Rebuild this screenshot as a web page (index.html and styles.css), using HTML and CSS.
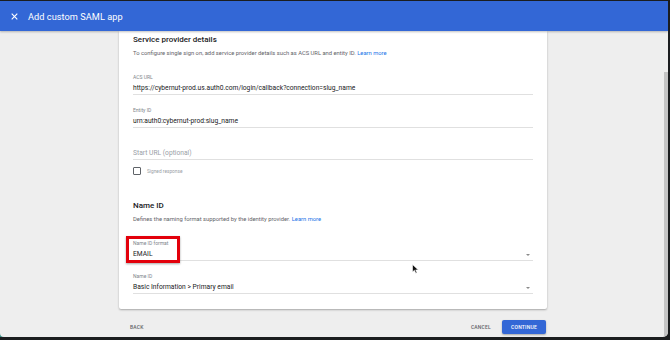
FILE: index.html
```html
<!DOCTYPE html>
<html lang="en">
<head>
    <meta charset="UTF-8">
    <meta name="viewport" content="width=device-width, initial-scale=1.0">
    <title>Add custom SAML app</title>
    <link rel="stylesheet" href="styles.css">
</head>
<body>

<div class="window">
    <header class="topbar">
        <span class="close">
            <svg width="7" height="7" viewBox="0 0 10 10"><path d="M1 1 L9 9 M9 1 L1 9" stroke="#fff" stroke-width="1.6" fill="none"/></svg>
        </span>
        <h1>Add custom SAML app</h1>
    </header>

    <main class="scroll">
        <section class="card">
            <h2>Service provider details</h2>
            <p class="hint">To configure single sign on, add service provider details such as ACS URL and entity ID. <a href="#">Learn more</a></p>

            <div class="field first">
                <label>ACS URL</label>
                <div class="value">https://cybernut-prod.us.auth0.com/login/callback?connection=slug_name</div>
            </div>

            <div class="field">
                <label>Entity ID</label>
                <div class="value">urn:auth0:cybernut-prod:slug_name</div>
            </div>

            <div class="field no-label">
                <div class="value placeholder">Start URL (optional)</div>
            </div>

            <div class="check-row">
                <span class="checkbox"></span>
                <span class="check-label">Signed response</span>
            </div>

            <h2 class="section">Name ID</h2>
            <p class="hint">Defines the naming format supported by the identity provider. <a href="#">Learn more</a></p>

            <div class="field first select">
                <label>Name ID format</label>
                <div class="value">EMAIL<span class="arrow"></span></div>
                <div class="highlight"></div>
            </div>

            <div class="field select">
                <label>Name ID</label>
                <div class="value">Basic Information &gt; Primary email<span class="arrow"></span></div>
            </div>
        </section>

        <footer class="actions">
            <button class="text-btn">BACK</button>
            <div class="right">
                <button class="text-btn">CANCEL</button>
                <button class="primary-btn">CONTINUE</button>
            </div>
        </footer>

        <div class="scrollbar"></div>

        <svg class="cursor" width="7" height="10" viewBox="0 0 7 10"><path d="M0.5 0.5 L0.5 8 L2.4 6.3 L3.8 9.3 L5 8.8 L3.7 5.9 L6.3 5.9 Z" fill="#111" stroke="#fff" stroke-width="0.6"/></svg>
    </main>
</div>

</body>
</html>
```

FILE: styles.css
```css
* {
    margin: 0;
    padding: 0;
    box-sizing: border-box;
}

html, body {
    width: 670px;
    height: 340px;
    overflow: hidden;
}

body {
    font-family: Roboto, "Liberation Sans", Arial, sans-serif;
    background-color: #1b1d1f;
    color: #202124;
    padding: 1px 2px 3px 0;
    position: relative;
}

/* desktop peeking through the bottom-left corner */
body::before {
    content: "";
    position: absolute;
    left: 0;
    bottom: 3px;
    width: 4px;
    height: 5px;
    background: #3a8f86;
}

.window {
    position: relative;
    width: 668px;
    height: 336px;
    background-color: #eeeeee;
    border-radius: 0 0 5px 4px;
    overflow: hidden;
    display: flex;
    flex-direction: column;
}

.topbar {
    height: 30px;
    background-color: #3367d6;
    display: flex;
    align-items: center;
    padding-left: 11px;
    box-shadow: 0 1px 2px rgba(0, 0, 0, 0.25);
    position: relative;
    z-index: 2;
}

.close {
    display: flex;
    width: 7px;
    height: 7px;
}

.topbar h1 {
    margin-left: 10px;
    font-size: 9.2px;
    font-weight: 400;
    color: #fff;
    letter-spacing: 0.05px;
}

.scroll {
    flex: 1;
    position: relative;
}

.card {
    width: 428px;
    margin-left: 119px;
    background-color: #fff;
    padding: 4px 14px 15px 14px;
    border-radius: 0 0 2px 2px;
    box-shadow: 0 1px 2px rgba(0, 0, 0, 0.3);
}

.card h2 {
    font-size: 8px;
    font-weight: 500;
    line-height: 10px;
    color: #202124;
}

.card h2.section {
    margin-top: 26px;
}

.hint {
    margin-top: 4px;
    font-size: 5.8px;
    line-height: 8px;
    color: #5f6368;
}

.hint a {
    color: #1a73e8;
    text-decoration: none;
}

.field {
    position: relative;
    margin-top: 12px;
}

.field.first {
    margin-top: 17px;
}

.field.no-label {
    padding-top: 9px;
}

.field label {
    display: block;
    font-size: 5px;
    line-height: 6px;
    color: #80868b;
    margin-bottom: 4px;
}

.field .value {
    position: relative;
    font-size: 6.7px;
    line-height: 9px;
    padding-bottom: 1px;
    border-bottom: 1px solid #e0e0e0;
    color: #202124;
}

.field .value.placeholder {
    color: #9aa0a6;
}

.arrow {
    position: absolute;
    right: 3px;
    top: 4px;
    width: 0;
    height: 0;
    border-left: 2.5px solid transparent;
    border-right: 2.5px solid transparent;
    border-top: 2.5px solid #8a8a8a;
}

.highlight {
    position: absolute;
    left: -7px;
    top: -4px;
    width: 54px;
    height: 27px;
    border: 3px solid #e3000b;
    box-shadow: 0 1px 2px rgba(0, 0, 0, 0.35);
}

.check-row {
    display: flex;
    align-items: center;
    margin-top: 7px;
    height: 8px;
}

.checkbox {
    width: 8px;
    height: 8px;
    border: 1px solid #5f6368;
    border-radius: 1px;
}

.check-label {
    margin-left: 6px;
    font-size: 4.8px;
    color: #9aa0a6;
}

.actions {
    width: 428px;
    margin-left: 119px;
    padding-top: 11px;
    display: flex;
    justify-content: space-between;
    align-items: center;
}

.actions .right {
    display: flex;
    align-items: center;
    gap: 11px;
}

.text-btn {
    font-family: inherit;
    background: none;
    border: none;
    font-size: 5px;
    font-weight: 500;
    letter-spacing: 0.2px;
    color: #5f6368;
    height: 14px;
    padding: 0 11px;
}

.actions .right .text-btn {
    padding: 0;
}

.primary-btn {
    font-family: inherit;
    width: 44px;
    height: 14px;
    border: none;
    border-radius: 2px;
    background-color: #3367d6;
    color: #fff;
    font-size: 5px;
    font-weight: 500;
    letter-spacing: 0.2px;
    box-shadow: 0 1px 2px rgba(0, 0, 0, 0.3);
    margin-right: 1px;
}

.scrollbar {
    position: absolute;
    right: 0;
    top: 41px;
    bottom: 0;
    width: 4px;
    background-color: #c4c4c4;
}

.cursor {
    position: absolute;
    left: 412px;
    top: 233px;
}
```
